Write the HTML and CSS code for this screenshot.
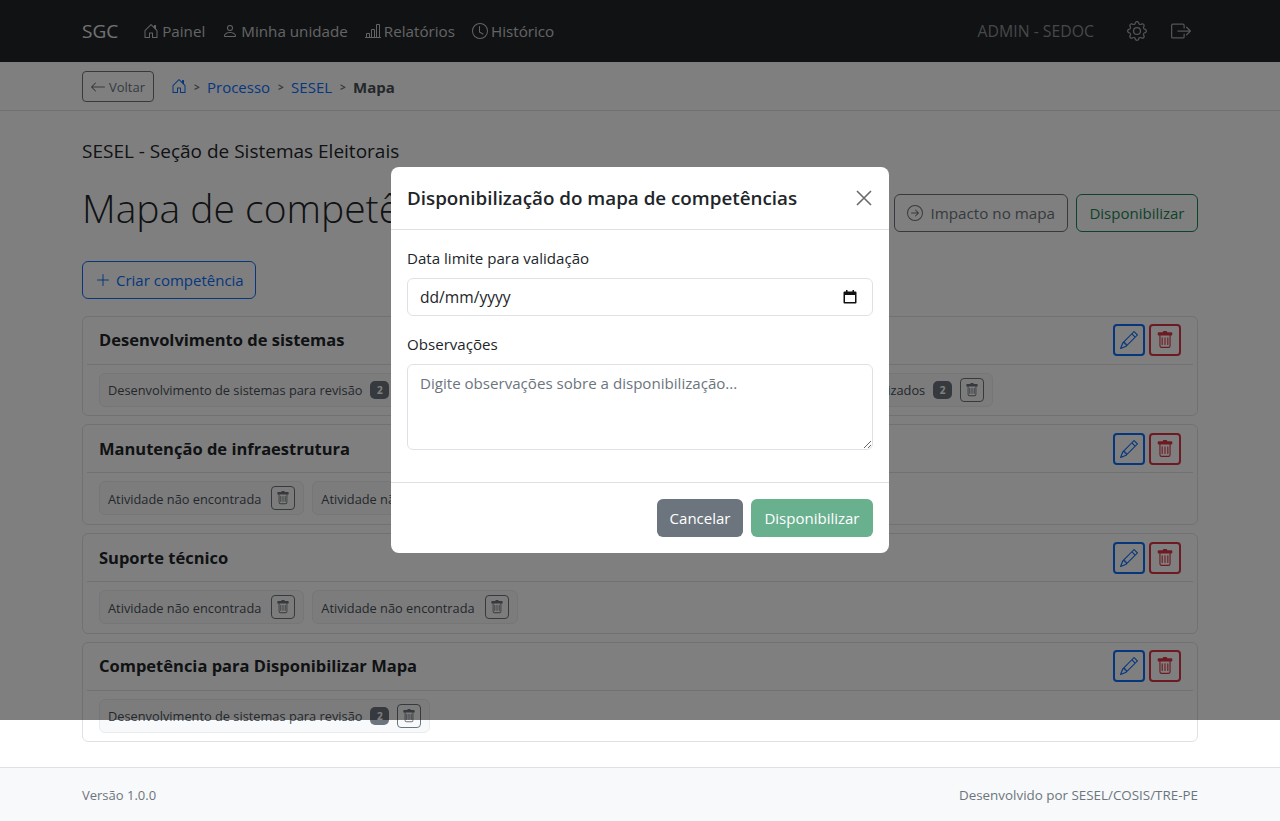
FILE: index.html
```html
<!DOCTYPE html>
<html lang="pt-BR">
<head>
    <meta charset="UTF-8">
    <meta name="viewport" content="width=device-width, initial-scale=1.0">
    <title>SGC</title>
    <link rel="stylesheet" href="styles.css">
</head>
<body>
    <svg class="sprite" xmlns="http://www.w3.org/2000/svg">
        <symbol id="i-house" viewBox="0 0 16 16"><path d="M8.354 1.146a.5.5 0 0 0-.708 0l-6 6A.5.5 0 0 0 1.5 7.5v7a.5.5 0 0 0 .5.5h4.5a.5.5 0 0 0 .5-.5v-4h2v4a.5.5 0 0 0 .5.5H14a.5.5 0 0 0 .5-.5v-7a.5.5 0 0 0-.146-.354L13 5.793V2.5a.5.5 0 0 0-.5-.5h-1a.5.5 0 0 0-.5.5v1.293L8.354 1.146zM2.5 14V7.707l5.5-5.5 5.5 5.5V14H10v-4a.5.5 0 0 0-.5-.5h-3a.5.5 0 0 0-.5.5v4H2.5z"/></symbol>
        <symbol id="i-person" viewBox="0 0 16 16"><path d="M8 8a3 3 0 1 0 0-6 3 3 0 0 0 0 6Zm2-3a2 2 0 1 1-4 0 2 2 0 0 1 4 0Zm4 8c0 1-1 1-1 1H3s-1 0-1-1 1-4 6-4 6 3 6 4Zm-1-.004c-.001-.246-.154-.986-.832-1.664C11.516 10.68 10.289 10 8 10c-2.29 0-3.516.68-4.168 1.332-.678.678-.83 1.418-.832 1.664h10Z"/></symbol>
        <symbol id="i-chart" viewBox="0 0 16 16"><path d="M11 2a1 1 0 0 1 1-1h2a1 1 0 0 1 1 1v12h.5a.5.5 0 0 1 0 1H.5a.5.5 0 0 1 0-1H1v-3a1 1 0 0 1 1-1h2a1 1 0 0 1 1 1v3h1V7a1 1 0 0 1 1-1h2a1 1 0 0 1 1 1v7h1V2zm1 12h2V2h-2v12zm-3 0V7H7v7h2zm-5 0v-3H2v3h2z"/></symbol>
        <symbol id="i-clock" viewBox="0 0 16 16"><path d="M8 3.5a.5.5 0 0 0-1 0V9a.5.5 0 0 0 .252.434l3.5 2a.5.5 0 0 0 .496-.868L8 8.71V3.5z"/><path d="M8 16A8 8 0 1 0 8 0a8 8 0 0 0 0 16zm7-8A7 7 0 1 1 1 8a7 7 0 0 1 14 0z"/></symbol>
        <symbol id="i-gear" viewBox="0 0 16 16"><path d="M8 4.754a3.246 3.246 0 1 0 0 6.492 3.246 3.246 0 0 0 0-6.492zM5.754 8a2.246 2.246 0 1 1 4.492 0 2.246 2.246 0 0 1-4.492 0z"/><path d="M9.796 1.343c-.527-1.79-3.065-1.79-3.592 0l-.094.319a.873.873 0 0 1-1.255.52l-.292-.16c-1.64-.892-3.433.902-2.54 2.541l.159.292a.873.873 0 0 1-.52 1.255l-.319.094c-1.79.527-1.79 3.065 0 3.592l.319.094a.873.873 0 0 1 .52 1.255l-.16.292c-.892 1.64.901 3.434 2.541 2.54l.292-.159a.873.873 0 0 1 1.255.52l.094.319c.527 1.79 3.065 1.79 3.592 0l.094-.319a.873.873 0 0 1 1.255-.52l.292.16c1.64.893 3.434-.902 2.54-2.541l-.159-.292a.873.873 0 0 1 .52-1.255l.319-.094c1.79-.527 1.79-3.065 0-3.592l-.319-.094a.873.873 0 0 1-.52-1.255l.16-.292c.893-1.64-.902-3.433-2.541-2.54l-.292.159a.873.873 0 0 1-1.255-.52l-.094-.319zm-2.633.283c.246-.835 1.428-.835 1.674 0l.094.319a1.873 1.873 0 0 0 2.693 1.115l.291-.16c.764-.415 1.6.42 1.184 1.185l-.159.292a1.873 1.873 0 0 0 1.116 2.692l.318.094c.835.246.835 1.428 0 1.674l-.319.094a1.873 1.873 0 0 0-1.115 2.693l.16.291c.415.764-.42 1.6-1.185 1.184l-.291-.159a1.873 1.873 0 0 0-2.693 1.116l-.094.318c-.246.835-1.428.835-1.674 0l-.094-.319a1.873 1.873 0 0 0-2.692-1.115l-.292.16c-.764.415-1.6-.42-1.184-1.185l.159-.291A1.873 1.873 0 0 0 1.945 8.93l-.319-.094c-.835-.246-.835-1.428 0-1.674l.319-.094A1.873 1.873 0 0 0 3.06 4.377l-.16-.292c-.415-.764.42-1.6 1.185-1.184l.292.159a1.873 1.873 0 0 0 2.692-1.115l.094-.319z"/></symbol>
        <symbol id="i-exit" viewBox="0 0 16 16"><path d="M10 12.5a.5.5 0 0 1-.5.5h-8a.5.5 0 0 1-.5-.5v-9a.5.5 0 0 1 .5-.5h8a.5.5 0 0 1 .5.5v2a.5.5 0 0 0 1 0v-2A1.5 1.5 0 0 0 9.5 2h-8A1.5 1.5 0 0 0 0 3.5v9A1.5 1.5 0 0 0 1.5 14h8a1.5 1.5 0 0 0 1.5-1.5v-2a.5.5 0 0 0-1 0v2z"/><path d="M15.854 8.354a.5.5 0 0 0 0-.708l-3-3a.5.5 0 0 0-.708.708L14.293 7.5H5.5a.5.5 0 0 0 0 1h8.793l-2.147 2.146a.5.5 0 0 0 .708.708l3-3z"/></symbol>
        <symbol id="i-back" viewBox="0 0 16 16"><path d="M15 8a.5.5 0 0 0-.5-.5H2.707l3.147-3.146a.5.5 0 1 0-.708-.708l-4 4a.5.5 0 0 0 0 .708l4 4a.5.5 0 0 0 .708-.708L2.707 8.5H14.5A.5.5 0 0 0 15 8z"/></symbol>
        <symbol id="i-go" viewBox="0 0 16 16"><path d="M1 8a7 7 0 1 0 14 0A7 7 0 0 0 1 8zm15 0A8 8 0 1 1 0 8a8 8 0 0 1 16 0zM4.5 7.5a.5.5 0 0 0 0 1h5.793l-2.147 2.146a.5.5 0 0 0 .708.708l3-3a.5.5 0 0 0 0-.708l-3-3a.5.5 0 1 0-.708.708L10.293 7.5H4.5z"/></symbol>
        <symbol id="i-plus" viewBox="0 0 16 16"><path d="M8 2a.5.5 0 0 1 .5.5v5h5a.5.5 0 0 1 0 1h-5v5a.5.5 0 0 1-1 0v-5h-5a.5.5 0 0 1 0-1h5v-5A.5.5 0 0 1 8 2Z"/></symbol>
        <symbol id="i-pencil" viewBox="0 0 16 16"><path d="M12.146.146a.5.5 0 0 1 .708 0l3 3a.5.5 0 0 1 0 .708l-10 10a.5.5 0 0 1-.168.11l-5 2a.5.5 0 0 1-.65-.65l2-5a.5.5 0 0 1 .11-.168l10-10zM11.207 2.5 13.5 4.793 14.793 3.5 12.5 1.207 11.207 2.5zm1.586 3L10.5 3.207 4 9.707V10h.5a.5.5 0 0 1 .5.5v.5h.5a.5.5 0 0 1 .5.5v.5h.293l6.5-6.5zm-9.761 5.175-.106.106-1.528 3.821 3.821-1.528.106-.106A.5.5 0 0 1 5 12.5V12h-.5a.5.5 0 0 1-.5-.5V11h-.5a.5.5 0 0 1-.468-.325z"/></symbol>
        <symbol id="i-trash" viewBox="0 0 16 16"><path d="M5.5 5.5A.5.5 0 0 1 6 6v6a.5.5 0 0 1-1 0V6a.5.5 0 0 1 .5-.5zm2.5 0a.5.5 0 0 1 .5.5v6a.5.5 0 0 1-1 0V6a.5.5 0 0 1 .5-.5zm3 .5a.5.5 0 0 0-1 0v6a.5.5 0 0 0 1 0V6z"/><path d="M14.5 3a1 1 0 0 1-1 1H13v9a2 2 0 0 1-2 2H5a2 2 0 0 1-2-2V4h-.5a1 1 0 0 1-1-1V2a1 1 0 0 1 1-1H6a1 1 0 0 1 1-1h2a1 1 0 0 1 1 1h3.5a1 1 0 0 1 1 1v1zM4.118 4 4 4.059V13a1 1 0 0 0 1 1h6a1 1 0 0 0 1-1V4.059L11.882 4H4.118zM2.5 3V2h11v1h-11z"/></symbol>
    </svg>

    <nav class="navbar">
        <div class="container nav-inner">
            <a class="brand" href="#">SGC</a>
            <a class="nav-link" href="#"><svg class="icon"><use href="#i-house"/></svg>Painel</a>
            <a class="nav-link" href="#"><svg class="icon"><use href="#i-person"/></svg>Minha unidade</a>
            <a class="nav-link" href="#"><svg class="icon"><use href="#i-chart"/></svg>Relatórios</a>
            <a class="nav-link" href="#"><svg class="icon"><use href="#i-clock"/></svg>Histórico</a>
            <span class="nav-user">ADMIN - SEDOC</span>
            <a class="nav-tool" href="#"><svg class="icon-lg"><use href="#i-gear"/></svg></a>
            <a class="nav-tool" href="#"><svg class="icon-lg"><use href="#i-exit"/></svg></a>
        </div>
    </nav>

    <div class="crumbs">
        <div class="container crumbs-inner">
            <button class="btn-back"><svg class="icon"><use href="#i-back"/></svg>Voltar</button>
            <a class="crumb-home" href="#"><svg class="icon"><use href="#i-house"/></svg></a>
            <span class="sep">&gt;</span>
            <a class="crumb" href="#">Processo</a>
            <span class="sep">&gt;</span>
            <a class="crumb" href="#">SESEL</a>
            <span class="sep">&gt;</span>
            <strong class="crumb-now">Mapa</strong>
        </div>
    </div>

    <main class="container content">
        <p class="unit">SESEL - Seção de Sistemas Eleitorais</p>
        <div class="title-row">
            <h1>Mapa de competências</h1>
            <div class="title-actions">
                <button class="btn btn-gray"><svg class="icon"><use href="#i-go"/></svg>Impacto no mapa</button>
                <button class="btn btn-green">Disponibilizar</button>
            </div>
        </div>
        <button class="btn btn-blue btn-create"><svg class="icon"><use href="#i-plus"/></svg>Criar competência</button>

        <section class="card">
            <header class="card-head">
                <h2>Desenvolvimento de sistemas</h2>
                <button class="square sq-blue"><svg class="icon-sq"><use href="#i-pencil"/></svg></button>
                <button class="square sq-red"><svg class="icon-sq"><use href="#i-trash"/></svg></button>
            </header>
            <div class="card-body">
                <div class="pill">Desenvolvimento de sistemas para revisão<span class="badge">2</span><button class="pill-del"><svg class="icon-del"><use href="#i-trash"/></svg></button></div>
                <div class="pill">Conhecimento de ferramentas, bibliotecas e frameworks amplamente utilizados<span class="badge">2</span><button class="pill-del"><svg class="icon-del"><use href="#i-trash"/></svg></button></div>
            </div>
        </section>

        <section class="card">
            <header class="card-head">
                <h2>Manutenção de infraestrutura</h2>
                <button class="square sq-blue"><svg class="icon-sq"><use href="#i-pencil"/></svg></button>
                <button class="square sq-red"><svg class="icon-sq"><use href="#i-trash"/></svg></button>
            </header>
            <div class="card-body">
                <div class="pill">Atividade não encontrada<button class="pill-del"><svg class="icon-del"><use href="#i-trash"/></svg></button></div>
                <div class="pill">Atividade não encontrada<button class="pill-del"><svg class="icon-del"><use href="#i-trash"/></svg></button></div>
            </div>
        </section>

        <section class="card">
            <header class="card-head">
                <h2>Suporte técnico</h2>
                <button class="square sq-blue"><svg class="icon-sq"><use href="#i-pencil"/></svg></button>
                <button class="square sq-red"><svg class="icon-sq"><use href="#i-trash"/></svg></button>
            </header>
            <div class="card-body">
                <div class="pill">Atividade não encontrada<button class="pill-del"><svg class="icon-del"><use href="#i-trash"/></svg></button></div>
                <div class="pill">Atividade não encontrada<button class="pill-del"><svg class="icon-del"><use href="#i-trash"/></svg></button></div>
            </div>
        </section>

        <section class="card">
            <header class="card-head">
                <h2>Competência para Disponibilizar Mapa</h2>
                <button class="square sq-blue"><svg class="icon-sq"><use href="#i-pencil"/></svg></button>
                <button class="square sq-red"><svg class="icon-sq"><use href="#i-trash"/></svg></button>
            </header>
            <div class="card-body">
                <div class="pill">Desenvolvimento de sistemas para revisão<span class="badge">2</span><button class="pill-del"><svg class="icon-del"><use href="#i-trash"/></svg></button></div>
            </div>
        </section>
    </main>

    <footer class="footer">
        <div class="container footer-inner">
            <span>Versão 1.0.0</span>
            <span class="footer-credit">Desenvolvido por SESEL/COSIS/TRE-PE</span>
        </div>
    </footer>

    <!-- backdrop only reaches y=720, as in the screenshot -->
    <div class="backdrop">
        <div class="modal">
            <div class="modal-head">
                <h3>Disponibilização do mapa de competências</h3>
                <button class="modal-close" aria-label="Fechar">
                    <svg viewBox="0 0 16 16" class="close-x"><path d="M1 1l14 14M15 1L1 15"/></svg>
                </button>
            </div>
            <div class="modal-body">
                <label class="field-label">Data limite para validação</label>
                <!-- the browser here would show mm/dd/yyyy, so the date box is drawn by hand -->
                <div class="field date-field">
                    <span>dd/mm/yyyy</span>
                    <svg class="cal" viewBox="0 0 14 14"><path d="M3 0v1.5H1.5A1 1 0 0 0 .5 2.5v10a1 1 0 0 0 1 1h11a1 1 0 0 0 1-1v-10a1 1 0 0 0-1-1H11V0H9.5v1.5h-5V0H3zM2 5h10v7H2V5z"/></svg>
                </div>
                <label class="field-label" for="obs">Observações</label>
                <textarea class="field field-area" id="obs" rows="3" placeholder="Digite observações sobre a disponibilização..."></textarea>
            </div>
            <div class="modal-foot">
                <button class="btn-solid btn-cancel">Cancelar</button>
                <button class="btn-solid btn-ok">Disponibilizar</button>
            </div>
        </div>
    </div>
</body>
</html>
```

FILE: styles.css
```css
* {
    box-sizing: border-box;
}
html, body {
    margin: 0;
    padding: 0;
}
body {
    font-family: "Open Sans", "Noto Sans", sans-serif;
    font-size: 15px;
    line-height: 1.5;
    color: #212529;
    background: #fff;
    min-height: 821px;
    display: flex;
    flex-direction: column;
}
a {
    text-decoration: none;
}
button {
    font-family: inherit;
    cursor: pointer;
}
.sprite {
    display: none;
}
.container {
    width: 1140px;
    margin: 0 auto;
    padding: 0 12px;
}
.icon {
    width: 16px;
    height: 16px;
    fill: currentColor;
    flex: none;
}
.icon-lg {
    width: 20px;
    height: 20px;
    fill: currentColor;
    display: block;
}

/* navbar */
.navbar {
    background: #212529;
    height: 62px;
}
.nav-inner {
    display: flex;
    align-items: center;
    height: 62px;
}
.brand {
    color: #e5e5e5;
    font-size: 19px;
    margin-right: 25px;
}
.nav-link {
    color: #c8c9ca;
    font-size: 15.2px;
    display: flex;
    align-items: center;
    gap: 3px;
    margin-right: 17px;
}
.nav-user {
    margin-left: auto;
    padding-top: 2px;
    font-size: 15.8px;
    color: #8d9094;
    margin-right: 33px;
}
.nav-tool {
    color: #a6a8ab;
    margin-right: 24px;
    display: block;
}
.nav-tool:last-child {
    margin-right: 7px;
}

/* breadcrumb */
.crumbs {
    height: 49px;
    border-bottom: 1px solid #dee2e6;
    background: #fff;
}
.crumbs-inner {
    display: flex;
    align-items: center;
    height: 48px;
}
.btn-back {
    display: flex;
    align-items: center;
    gap: 3px;
    height: 31px;
    width: 72px;
    padding: 1px 7px 0;
    font-size: 13px;
    color: #6c757d;
    background: none;
    border: 1px solid #6c757d;
    border-radius: 4px;
    margin-right: 17px;
}
.crumb-home {
    color: #0d6efd;
    display: flex;
    margin-right: 7px;
}
.sep {
    width: 5px;
    padding-top: 2px;
    color: #6c757d;
    font-size: 10px;
    font-weight: 700;
    margin-right: 8px;
}
.crumb {
    color: #0d6efd;
    padding-top: 2px;
    margin-right: 8px;
}
.crumb-now {
    color: #495057;
    padding-top: 2px;
}

/* page content */
.content {
    flex: 1;
    padding-top: 28px;
}
.unit {
    margin: 0;
    font-size: 19px;
    line-height: 24px;
}
.title-row {
    display: flex;
    align-items: flex-end;
    justify-content: space-between;
    margin-top: 13px;
    height: 56px;
}
h1 {
    margin: 0;
    font-size: 39px;
    font-weight: 300;
    line-height: 48px;
}
.title-actions {
    display: flex;
    gap: 8px;
}
.btn {
    display: inline-flex;
    align-items: center;
    gap: 8px;
    height: 38px;
    padding: 0 12px;
    font-size: 15px;
    background: none;
    border: 1px solid;
    border-radius: 6px;
}
.btn-gray {
    color: #6c757d;
    border-color: #6c757d;
    font-size: 15.2px;
}
.btn-green {
    color: #198754;
    border-color: #198754;
    padding: 0 12.5px;
}
.btn-blue {
    color: #0d6efd;
    border-color: #0d6efd;
}
.btn-create {
    margin: 29px 0 16.8px;
    padding-right: 11px;
    display: flex;
    gap: 5px;
}

/* cards */
.card {
    border: 1px solid #dee2e6;
    border-radius: 6px;
    padding: 0 4px;
    margin-bottom: 8px;
}
.card-head {
    display: flex;
    align-items: center;
    gap: 4px;
    height: 48px;
    padding: 0 12px;
    border-bottom: 1px solid #dee2e6;
}
h2 {
    margin: 0 auto 0 0;
    font-size: 16.5px;
    font-weight: 700;
    line-height: 24px;
}
.square {
    width: 32px;
    height: 32px;
    padding: 0;
    background: none;
    border: 2px solid;
    border-radius: 4px;
    display: flex;
    align-items: center;
    justify-content: center;
}
.sq-blue {
    color: #0d6efd;
}
.sq-red {
    color: #dc3545;
}
.icon-sq {
    width: 18px;
    height: 18px;
    fill: currentColor;
}
.card-body {
    display: flex;
    gap: 8px;
    padding: 8px 12px 8.67px;
}
.pill {
    display: flex;
    align-items: center;
    height: 34px;
    padding: 2px 8px 0;
    font-size: 12.8px;
    color: #495057;
    background: #f8f9fa;
    border: 1px solid #e9ecef;
    border-radius: 6px;
    white-space: nowrap;
}
.badge {
    min-width: 19px;
    height: 18px;
    margin: -2px 0 0 8px;
    text-align: center;
    background: #6c757d;
    color: #fff;
    font-size: 10px;
    font-weight: 700;
    line-height: 18px;
    border-radius: 5px;
}
.pill-del {
    width: 24px;
    height: 24px;
    margin: -2px 0 0 10px;
    padding: 0;
    background: none;
    border: 1px solid #6c757d;
    border-radius: 4px;
    color: #6c757d;
    display: flex;
    align-items: center;
    justify-content: center;
}
.badge + .pill-del {
    margin-left: 8px;
}
.icon-del {
    width: 14px;
    height: 14px;
    fill: currentColor;
}

/* footer */
.footer {
    background: #f8f9fa;
    border-top: 1px solid #dee2e6;
    height: 54px;
}
.footer-inner {
    display: flex;
    justify-content: space-between;
    align-items: center;
    height: 53px;
    padding-top: 2px;
    font-size: 13px;
    color: #6c757d;
}
.footer-credit {
    font-size: 13.4px;
}

/* modal */
.backdrop {
    position: absolute;
    left: 0;
    top: 0;
    width: 1280px;
    height: 720px;
    background: rgba(0, 0, 0, .5);
    display: flex;
    align-items: center;
    justify-content: center;
}
.modal {
    width: 498px;
    background: #fff;
    border-radius: 8px;
}
.modal-head {
    display: flex;
    align-items: center;
    justify-content: space-between;
    height: 63px;
    padding: 0 16px;
    border-bottom: 1px solid #dee2e6;
}
h3 {
    margin: 0;
    font-size: 18.8px;
    font-weight: 600;
    line-height: 27px;
    color: #212529;
}
.modal-close {
    background: none;
    border: 0;
    padding: 0;
    width: 18px;
    height: 18px;
}
.close-x {
    display: block;
    width: 16px;
    height: 16px;
    margin: 1px;
    fill: none;
    stroke: #6a6a6a;
    stroke-width: 1.6;
}
.modal-body {
    padding: 16px 16px 32px;
}
.field-label {
    display: block;
    margin-bottom: 8px;
    font-size: 15.1px;
    line-height: 24px;
}
.field {
    display: block;
    width: 100%;
    height: 38px;
    padding: 6px 12px;
    font-family: inherit;
    font-size: 15.1px;
    line-height: 24px;
    color: #212529;
    background: #fff;
    border: 1px solid #dee2e6;
    border-radius: 6px;
    margin-bottom: 16px;
}
.date-field {
    display: flex;
    align-items: center;
    justify-content: space-between;
    font-size: 15.6px;
}
.cal {
    width: 14px;
    height: 14px;
    margin-right: 3px;
    fill: #111;
}
.field-area {
    height: 86px;
    margin-bottom: 0;
}
.field-area::placeholder {
    color: #6c757d;
}
.modal-foot {
    display: flex;
    justify-content: flex-end;
    gap: 8px;
    padding: 16px;
    border-top: 1px solid #dee2e6;
}
.btn-solid {
    height: 38px;
    font-size: 15px;
    color: #fff;
    border: 0;
    border-radius: 6px;
}
.btn-cancel {
    padding: 0 12.5px;
    background: #6c757d;
}
.btn-ok {
    padding: 0 13.5px;
    background: #69b08f;
}
```
